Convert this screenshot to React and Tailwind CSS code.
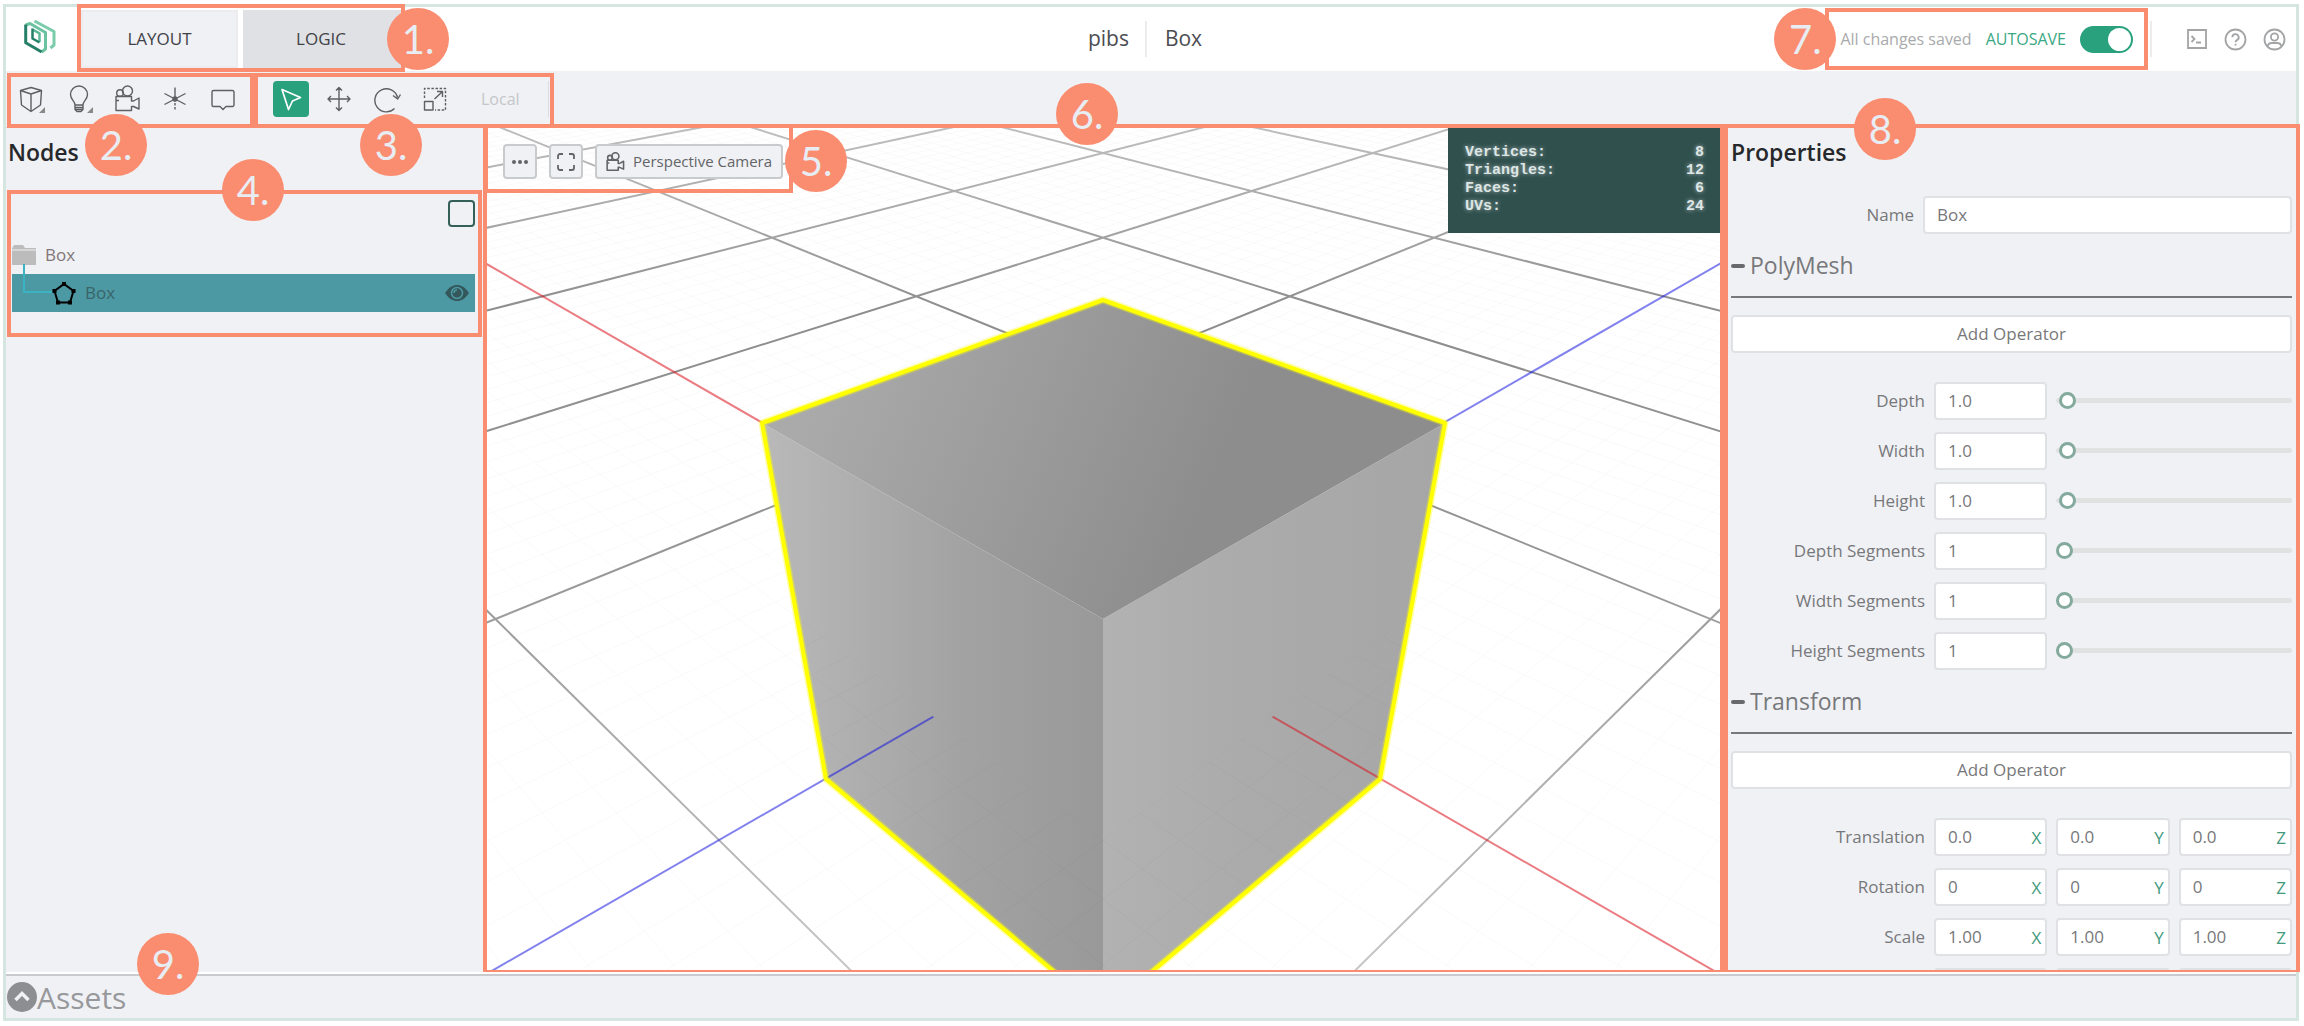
import React from "react";

/* ---------- ground grid projection ---------- */

const VIEW = { x: 484, y: 127, w: 1240, h: 845 };

// Projects the ground point (u, v) to scene coordinates.
function project(u, v) {
  const p = u - v;
  const q = u + v;
  const w = 1 - 0.2088 * q;
  return [1103 + (303.8 * p) / w, (619 + 45.7 * q) / w];
}

function segment(u1, v1, u2, v2) {
  const [x1, y1] = project(u1, v1);
  const [x2, y2] = project(u2, v2);
  return `M${x1.toFixed(1)} ${y1.toFixed(1)}L${x2.toFixed(1)} ${y2.toFixed(1)}`;
}

const NEAR = 3;
const FAR = -9;
const gridPath = (minor) => {
  let d = "";
  for (let i = FAR * 10; i <= 20; i++) {
    const isMajor = i % 10 === 0;
    if (i === 0 || isMajor === minor) continue;
    const k = i / 10;
    const end = Math.min(3, NEAR - k);
    d += segment(k, FAR, k, end) + segment(FAR, k, end, k);
  }
  return d;
};
const MAJOR = gridPath(false);
const MINOR = gridPath(true);
const AXIS_U = segment(FAR, 0, NEAR, 0);
const AXIS_V = segment(0, FAR, 0, NEAR);

function Scene() {
  return (
    <svg
      className="block h-full w-full"
      viewBox={`${VIEW.x} ${VIEW.y} ${VIEW.w} ${VIEW.h}`}
      preserveAspectRatio="xMidYMid slice"
      role="img"
      aria-label="3D view of a box"
    >
      <defs>
        <linearGradient id="top" gradientUnits="userSpaceOnUse" x1="820" y1="390" x2="1190" y2="540">
          <stop offset="0" stopColor="#aaaaaa" />
          <stop offset="1" stopColor="#8d8d8d" />
        </linearGradient>
        <linearGradient id="left" gradientUnits="userSpaceOnUse" x1="762" y1="0" x2="1103" y2="0">
          <stop offset="0" stopColor="#b9b9b9" />
          <stop offset="0.6" stopColor="#a2a2a2" />
          <stop offset="1" stopColor="#999999" />
        </linearGradient>
        <linearGradient id="right" gradientUnits="userSpaceOnUse" x1="1103" y1="0" x2="1445" y2="0">
          <stop offset="0" stopColor="#b2b2b2" />
          <stop offset="0.4" stopColor="#ababab" />
          <stop offset="1" stopColor="#a6a6a6" />
        </linearGradient>
        <linearGradient id="fade" gradientUnits="userSpaceOnUse" x1="0" y1="127" x2="0" y2="972">
          <stop offset="0" stopColor="#6e6e6e" stopOpacity="0.45" />
          <stop offset="0.22" stopColor="#5c5c5c" stopOpacity="0.7" />
          <stop offset="0.5" stopColor="#5c5c5c" stopOpacity="0.65" />
          <stop offset="1" stopColor="#5c5c5c" stopOpacity="0.35" />
        </linearGradient>
        <mask id="visible" maskUnits="userSpaceOnUse" x="0" y="0" width="2304" height="1100">
          <rect width="2304" height="1100" fill="white" />
          <path d="M762 423L1103 300L1445 423L1407 619L1103 840L799 619Z" fill="black" />
        </mask>
      </defs>
      <rect x="-2000" y="-2000" width="8000" height="6000" fill="#ffffff" />
      <path d="M762 423L1103 619V1013L826 779Z" fill="url(#left)" />
      <path d="M1445 423L1103 619V1013L1380 779Z" fill="url(#right)" />
      <path d="M762 423L1103 300L1445 423L1103 619Z" fill="url(#top)" />
      <g mask="url(#visible)" fill="none">
        <path d={MINOR} stroke="#000000" strokeOpacity="0.025" strokeWidth="1" />
        <path d={MAJOR} stroke="url(#fade)" strokeWidth="2" />
        <path d={AXIS_U} stroke="#d9101c" strokeOpacity="0.55" strokeWidth="2" />
        <path d={AXIS_V} stroke="#0f0fe0" strokeOpacity="0.52" strokeWidth="2" />
      </g>
      <path
        d="M762 423L1103 300L1445 423L1380 779L1103 1013L826 779Z"
        fill="none"
        stroke="#ffff00"
        strokeOpacity="0.35"
        strokeWidth="7"
        strokeLinejoin="round"
      />
      <path
        d="M762 423L1103 300L1445 423L1380 779L1103 1013L826 779Z"
        fill="none"
        stroke="#ffff00"
        strokeWidth="4"
        strokeLinejoin="round"
      />
    </svg>
  );
}

/* ---------- icons ---------- */

function Icon({ className = "size-7", children, w = 28, h = 28, stroke = 1.4 }) {
  return (
    <svg
      className={className}
      viewBox={`0 0 ${w} ${h}`}
      fill="none"
      stroke="currentColor"
      strokeWidth={stroke}
      strokeLinejoin="round"
      aria-hidden="true"
    >
      {children}
    </svg>
  );
}

const CubeIcon = () => (
  <Icon>
    <path d="M14 2.500L24.500 5.500L23.500 20L14 26.500L4.500 20L3.500 5.500ZM3.500 5.500L14 9L24.500 5.500M14 9V26.500" />
    <path d="M28 22V28H22Z" fill="#888" stroke="none" />
  </Icon>
);
const BulbIcon = () => (
  <Icon>
    <path d="M10 20C10 16 5.500 14.500 5.500 9.500a8.500 8.500 0 0 1 17 0C22.500 14.500 18 16 18 20ZM10 20v4.500l2 2h4l2-2V20M10 22.500h8M10 24.500h8" />
    <path d="M28 22V28H22Z" fill="#888" stroke="none" />
  </Icon>
);
const CameraIcon = ({ className, stroke }) => (
  <Icon className={className} stroke={stroke}>
    <circle cx="7" cy="8" r="3.300" />
    <circle cx="14.500" cy="6" r="5" />
    <path d="M3 11.500H18.500V16H20.500L26 13V24L20.500 21.500H18.500V25.500H3ZM3 15.500H6" />
  </Icon>
);
const LocatorIcon = () => (
  <Icon>
    <path d="M14 2.500V14M3.500 8.500L24.500 19.500M3.500 19.500L24.500 8.500" />
    <path d="M14 14V26" strokeDasharray="2.500 1.500" />
    <circle cx="14" cy="14" r="2" fill="currentColor" />
  </Icon>
);
const CommentIcon = () => (
  <Icon>
    <path d="M4.500 5.500h19a1.500 1.500 0 0 1 1.500 1.500v13a1.500 1.500 0 0 1-1.500 1.500H17L14 24.500L11 21.500H4.500A1.500 1.500 0 0 1 3 20V7a1.500 1.500 0 0 1 1.500-1.500Z" />
  </Icon>
);
const SelectIcon = () => (
  <Icon stroke={1.7}>
    <path d="M5 4.500L23.500 12.500L15.500 16L11.500 24.500Z" />
  </Icon>
);
const MoveIcon = () => (
  <Icon>
    <path d="M14 2.500V25.500M3 14H25M11 5.500L14 2.500L17 5.500M11 22.500L14 25.500L17 22.500M6 11L3 14L6 17M22 11L25 14L22 17" />
  </Icon>
);
const RotateIcon = () => (
  <Icon>
    <path d="M21.500 23.500A11.500 11.500 0 1 1 24.500 12.500M20 10.500L24.700 14L27.500 9.500" />
  </Icon>
);
const ScaleIcon = () => (
  <Icon>
    <path d="M3.500 13V3.500H24.500V25H14" strokeDasharray="2.500 1.600" />
    <path d="M3.500 16.500H12V25H3.500ZM13.500 14L21.500 6.500M16 6.500H21.500V12" />
  </Icon>
);

const Logo = () => (
  <svg className="h-9 w-8" viewBox="0 0 32 36" fill="none" strokeWidth="3" strokeLinejoin="round" aria-hidden="true">
    <path d="M10.500 2L30 12.500V26L26.500 29" stroke="#7accaa" />
    <path d="M1.700 6L6 4.500L21.500 13.500V30L17.700 33" stroke="#6cc3a0" />
    <path d="M1.700 5.500V23.700L17.700 33" stroke="#268069" />
    <path d="M8.500 10.500L15.500 14.300V23" stroke="#5cb896" strokeWidth="2.500" />
    <path d="M8.500 9.500V19.500L15.500 23.500" stroke="#268069" strokeWidth="2.500" />
  </svg>
);

/* ---------- annotation callouts ---------- */

function Outline({ className }) {
  return <div aria-hidden="true" className={`pointer-events-none absolute z-10 border-4 border-[#fa8c70] ${className}`} />;
}

function Badge({ n, className }) {
  return (
    <span
      className={`pointer-events-none absolute z-20 flex size-[62px] items-center justify-center rounded-full bg-[#fa8c70] font-[Lato,sans-serif] text-[40px] leading-none text-[#e8edf3] ${className}`}
    >
      {n}.
    </span>
  );
}

/* ---------- form pieces ---------- */

const FIELD = "h-[38px] w-full min-w-0 rounded border-2 border-[#e0e1e4] bg-white px-3 text-[17px] text-[#77787b] outline-none";
const LABEL = "text-right text-[17px] text-[#77787b]";
const ROW = "grid grid-cols-[194px_1fr_1fr_1fr] items-center gap-[9px]";

function SliderRow({ id, label, value, inset }) {
  return (
    <div className={ROW}>
      <label htmlFor={id} className={LABEL}>{label}</label>
      <input id={id} className={FIELD} defaultValue={value} />
      <input
        type="range"
        min="0"
        max="100"
        defaultValue={inset ? 1 : 0}
        aria-label={`${label} slider`}
        className="col-span-2 h-5 w-full appearance-none bg-transparent [&::-webkit-slider-runnable-track]:h-[5px] [&::-webkit-slider-runnable-track]:rounded-full [&::-webkit-slider-runnable-track]:bg-[#e0e1e1] [&::-webkit-slider-thumb]:-mt-[6px] [&::-webkit-slider-thumb]:size-[17px] [&::-webkit-slider-thumb]:appearance-none [&::-webkit-slider-thumb]:rounded-full [&::-webkit-slider-thumb]:border-[3px] [&::-webkit-slider-thumb]:border-solid [&::-webkit-slider-thumb]:border-[#84a99d] [&::-webkit-slider-thumb]:bg-white"
      />
    </div>
  );
}

function VectorRow({ label, values }) {
  return (
    <div className={ROW} role="group" aria-label={label}>
      <span className={LABEL}>{label}</span>
      {["X", "Y", "Z"].map((axis, i) => (
        <label key={axis} className="relative block">
          <input className={FIELD} defaultValue={values[i]} aria-label={`${label} ${axis}`} />
          <span className="absolute top-2 right-[6px] text-[17px] leading-6 text-[#429a7d]">{axis}</span>
        </label>
      ))}
    </div>
  );
}

function Section({ title, children }) {
  return (
    <section className="mt-4">
      <h3 className="flex h-8 items-center gap-[5px] text-[23px] text-[#77787b]">
        <span className="h-1 w-[14px] rounded-sm bg-[#68696c]" aria-hidden="true" />
        {title}
      </h3>
      <hr className="mt-[14px] border-t-2 border-[#77787b]" />
      <button className="mt-[17px] flex h-[38px] w-full items-center justify-center rounded border-2 border-[#e0e1e4] bg-white text-[17px] text-[#77787b]">
        Add Operator
      </button>
      <div className="mt-[29px] flex flex-col gap-3">{children}</div>
    </section>
  );
}

const TOOL = "flex size-9 items-center justify-center rounded-sm text-[#5d5f63]";
const VIEW_BUTTON = "flex h-[35px] items-center justify-center rounded-sm border-2 border-[#c9cacc] bg-[#f0f1f4] text-[#626467]";

const STATS = [["Vertices:", 8], ["Triangles:", 12], ["Faces:", 6], ["UVs:", 24]];

const SLIDERS = [
  ["Depth", "1.0", true],
  ["Width", "1.0", true],
  ["Height", "1.0", true],
  ["Depth Segments", "1", false],
  ["Width Segments", "1", false],
  ["Height Segments", "1", false],
];

export default function App() {
  return (
    <div className="h-screen w-full bg-white pt-1 pr-[5px] pb-[5px] pl-[3px] font-['Open_Sans','Noto_Sans',sans-serif]">
      <div className="flex h-full flex-col border-[3px] border-[#d5e5e0] bg-[#f0f1f4]">
        {/* header */}
        <header className="flex h-16 shrink-0 items-center bg-white">
          <div className="flex flex-1 items-center">
            <a href="#home" aria-label="Home" className="flex w-[75px] justify-start pb-1 pl-[18px]">
              <Logo />
            </a>
            <nav className="relative flex h-[58px] gap-[5px]">
              <button className="w-[157px] border-2 border-[#ececee] bg-[#f0f1f4] text-[17px] text-[#414247]">LAYOUT</button>
              <button className="w-[160px] bg-[#e0e1e5] pr-1 text-[17px] text-[#414247]">LOGIC</button>
              <Outline className="-top-[6px] -right-[2px] -bottom-[4px] -left-[4px]" />
              <Badge n="1" className="top-[-2px] -right-[46px]" />
            </nav>
          </div>
          <div className="mr-3 flex h-9 items-center text-[21px] text-[#4c4d51]">
            <span className="pr-4">pibs</span>
            <span className="h-full w-[2px] bg-[#ececee]" />
            <span className="pl-[18px]">Box</span>
          </div>
          <div className="flex flex-1 items-center justify-end">
            <div className="relative flex h-[62px] items-center gap-[14px] pr-[15px] pl-[15px]">
              <span className="text-[16px] text-[#a9aaac]">All changes saved</span>
              <label htmlFor="autosave" className="text-[16px] text-[#3aa884]">AUTOSAVE</label>
              <input
                id="autosave"
                type="checkbox"
                role="switch"
                defaultChecked
                className="h-[27px] w-[53px] appearance-none rounded-full bg-[#28a17c] p-[2px] before:ml-auto before:block before:size-[23px] before:rounded-full before:bg-white"
              />
              <Outline className="inset-0" />
              <Badge n="7" className="top-0 -left-[51px]" />
            </div>
            <div className="ml-[2px] flex h-9 items-center gap-4 border-l-2 border-[#ececee] pr-[10px] pl-[34px] text-[#a3a4a6]">
              <button aria-label="Console">
                <Icon className="size-[22px]" w={22} h={22} stroke={1.8}>
                  <path d="M2 2H20V20H2ZM5.500 8L8.500 11L5.500 14M10 14.500H15" strokeLinejoin="miter" />
                </Icon>
              </button>
              <button aria-label="Help">
                <Icon className="size-[23px]" w={23} h={23} stroke={1.8}>
                  <circle cx="11.500" cy="11.500" r="10" />
                  <path d="M8.300 9.300a3.200 3.200 0 1 1 4.700 2.800c-1 .6-1.500 1-1.500 2.200M11.500 15.800V17.600" />
                </Icon>
              </button>
              <button aria-label="Account">
                <Icon className="size-[23px]" w={23} h={23} stroke={1.8}>
                  <circle cx="11.500" cy="11.500" r="10" />
                  <circle cx="11.500" cy="9" r="3.600" />
                  <path d="M4.500 18.500C5 15.800 7 15 9 15h5c2 0 4 .8 4.500 3.500" />
                </Icon>
              </button>
            </div>
          </div>
        </header>

        {/* toolbar */}
        <div className="flex h-14 shrink-0 items-center">
          <div className="relative flex h-full items-center gap-3 pr-[13px] pl-[7px]">
            <button className={TOOL} aria-label="Add mesh"><CubeIcon /></button>
            <button className={TOOL} aria-label="Add light"><BulbIcon /></button>
            <button className={TOOL} aria-label="Add camera"><CameraIcon /></button>
            <button className={TOOL} aria-label="Add locator"><LocatorIcon /></button>
            <button className={TOOL} aria-label="Add annotation"><CommentIcon /></button>
            <Outline className="top-[2px] right-0 -bottom-px left-px" />
            <Badge n="2" className="top-[43px] left-[79px]" />
          </div>
          <div className="relative flex h-full items-center gap-3 pl-[19px]">
            <button className={`${TOOL} bg-[#28a17c] !text-white`} aria-label="Select"><SelectIcon /></button>
            <button className={TOOL} aria-label="Move"><MoveIcon /></button>
            <button className={TOOL} aria-label="Rotate"><RotateIcon /></button>
            <button className={TOOL} aria-label="Scale"><ScaleIcon /></button>
            <button className="pr-7 pl-4 text-[16px] text-[#c5c6c9]" disabled>Local</button>
            <span className="mr-[5px] -ml-3 h-9 w-px bg-[#dcdde0]" />
            <Outline className="top-[2px] right-0 -bottom-px left-0" />
            <Badge n="3" className="top-[43px] left-[106px]" />
          </div>
        </div>

        {/* workspace */}
        <main className="flex min-h-0 flex-1">
          <aside className="relative w-[478px] shrink-0 border-t border-[#d5d6d9]">
            <h2 className="mt-[7px] ml-[2px] text-[23px] font-semibold text-[#27282b]">Nodes</h2>
            <div className="relative mt-5 mr-[2px] ml-px pt-[10px] pr-[7px] pb-[25px] pl-[5px]">
              <div className="flex justify-end">
                <input
                  type="checkbox"
                  aria-label="Select all nodes"
                  className="size-[27px] appearance-none rounded border-2 border-[#35605a] bg-[#f0f1f4]"
                />
              </div>
              <ul className="mt-[9px] text-[17px]">
                <li className="flex h-[38px] items-center gap-[9px] text-[#807678]">
                  <svg className="h-5 w-6" viewBox="0 0 24 20" fill="#bcbcbc" aria-hidden="true">
                    <path d="M0 3.500L2 0H11L13 3H24V4.500H0ZM0 5.500H24V20H0Z" />
                  </svg>
                  Box
                </li>
                <li className="flex h-[38px] items-center bg-[#4c99a4] text-[#3a6468]">
                  <svg className="-mt-[28px] h-8 w-10 shrink-0" viewBox="0 0 40 32" fill="none" stroke="#3cb3c3" strokeWidth="2" aria-hidden="true">
                    <path d="M12 1V29H40" />
                  </svg>
                  <svg className="size-6" viewBox="0 0 24 24" fill="none" stroke="#000" strokeWidth="2" aria-hidden="true">
                    <path d="M12 3L21.500 10L18 21.500H6L2.500 10Z" />
                    <path d="M10 1h4v4h-4ZM19.500 8h4v4h-4ZM16 19.500h4v4h-4ZM4 19.500h4v4h-4ZM.5 8h4v4h-4Z" fill="#000" stroke="none" />
                  </svg>
                  <span className="ml-[9px] flex-1">Box</span>
                  <button aria-label="Toggle visibility" className="mr-[6px]">
                    <svg className="h-4 w-6" viewBox="0 0 24 16" fill="none" aria-hidden="true">
                      <path d="M0 8C4 2 8 0 12 0S20 2 24 8C20 14 16 16 12 16S4 14 0 8Z" fill="#34575b" />
                      <circle cx="12" cy="8" r="5.500" stroke="#4c99a4" strokeWidth="1.500" />
                      <path d="M12 5A3 3 0 0 0 9 8" stroke="#4c99a4" strokeWidth="1.500" />
                    </svg>
                  </button>
                </li>
              </ul>
              <Outline className="inset-0" />
              <Badge n="4" className="-top-[31px] left-[215px]" />
            </div>
          </aside>

          <section className="relative min-w-0 flex-1" aria-label="Viewport">
            <Scene />
            <div className="absolute top-0 left-0 flex gap-3 pt-[17px] pr-[10px] pb-[14px] pl-[19px]">
              <button className={`${VIEW_BUTTON} w-[34px]`} aria-label="View options">
                <svg className="h-1 w-4" viewBox="0 0 16 4" fill="currentColor" aria-hidden="true">
                  <circle cx="2" cy="2" r="2" /><circle cx="8" cy="2" r="2" /><circle cx="14" cy="2" r="2" />
                </svg>
              </button>
              <button className={`${VIEW_BUTTON} w-[34px]`} aria-label="Frame selection">
                <Icon className="size-[18px]" w={18} h={18} stroke={1.8}>
                  <path d="M1 6V3a2 2 0 0 1 2-2H6M12 1h3a2 2 0 0 1 2 2V6M17 12v3a2 2 0 0 1-2 2H12M6 17H3a2 2 0 0 1-2-2V12" />
                </Icon>
              </button>
              <button className={`${VIEW_BUTTON} gap-2 pr-[9px] pl-2 text-[15px]`}>
                <CameraIcon className="size-5" stroke={2.2} />
                Perspective Camera
              </button>
              <Outline className="-top-[3px] right-0 bottom-0 left-0" />
              <Badge n="5" className="top-[3px] -right-[54px]" />
            </div>
            <dl className="absolute top-0 right-0 w-[276px] bg-[#30504e] py-[17px] pr-[20px] pl-[17px] font-['Liberation_Mono',monospace] text-[15px] leading-[18px] font-bold text-[#dde6e5] [text-shadow:0_0_4px_rgba(255,255,255,0.6)]">
              {STATS.map(([name, value]) => (
                <div key={name} className="flex justify-between">
                  <dt>{name}</dt>
                  <dd>{value}</dd>
                </div>
              ))}
            </dl>
            <Outline className="-top-[3px] right-0 bottom-0 -left-px border-b-2" />
            <Badge n="6" className="-top-[44px] left-[572px]" />
          </section>

          <aside className="relative w-[572px] shrink-0" aria-label="Properties">
            <div className="h-full overflow-hidden pr-1 pl-[7px]">
              <h2 className="mt-2 text-[23px] font-semibold text-[#27282b]">Properties</h2>
              <div className="mt-[26px] grid grid-cols-[183px_1fr] items-center gap-[9px]">
                <label htmlFor="name" className={LABEL}>Name</label>
                <input id="name" className={FIELD} defaultValue="Box" />
              </div>
              <Section title="PolyMesh">
                {SLIDERS.map(([label, value, inset]) => (
                  <SliderRow key={label} id={label.replace(" ", "-")} label={label} value={value} inset={inset} />
                ))}
              </Section>
              <Section title="Transform">
                <VectorRow label="Translation" values={["0.0", "0.0", "0.0"]} />
                <VectorRow label="Rotation" values={["0", "0", "0"]} />
                <VectorRow label="Scale" values={["1.00", "1.00", "1.00"]} />
                <div className={ROW}>
                  <span />
                  <input className={FIELD} aria-label="Pivot X" />
                  <input className={FIELD} aria-label="Pivot Y" />
                  <input className={FIELD} aria-label="Pivot Z" />
                </div>
              </Section>
            </div>
            <Outline className="-top-[3px] -right-[4px] bottom-0 left-0 border-b-2" />
            <Badge n="8" className="-top-[29px] left-[130px]" />
          </aside>
        </main>

        {/* assets drawer */}
        <footer className="relative shrink-0 border-t-2 border-white">
          <button className="flex h-11 w-full items-center border-t-2 border-[#c9cacd] pl-px text-[30px] text-[#97989b]">
            <svg className="size-[30px]" viewBox="0 0 30 30" aria-hidden="true">
              <circle cx="15" cy="15" r="15" fill="#8d8e91" />
              <path d="M8.500 18L15 11.500L21.500 18" fill="none" stroke="#f0f1f4" strokeWidth="3.500" />
            </svg>
            Assets
          </button>
          <Badge n="9" className="-top-[41px] left-[131px]" />
        </footer>
      </div>
    </div>
  );
}
